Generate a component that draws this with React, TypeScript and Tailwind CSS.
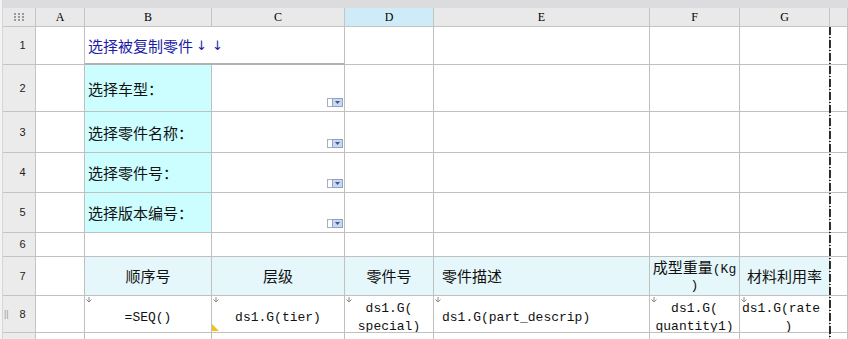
const cjk = "font-['Noto_Sans_CJK_SC',sans-serif] text-[15px]";
const mono = "font-['Liberation_Mono','Noto_Sans_CJK_SC',monospace] text-[13px]";
const line = "border-r border-b border-[#c0c0c0]";

const cols = "grid-cols-[33px_49px_127px_133px_89px_216px_90px_90px_18px]";
const rows = "grid-rows-[19px_38px_47px_41px_40px_40px_24px_39px_37px_20px]";

function Arrow() {
  return (
    <svg className="absolute left-[1px] top-[1px]" width="6" height="6" viewBox="0 0 6 6">
      <path d="M3 0 V5 M0.5 2.5 L3 5 L5.5 2.5" stroke="#8a8a8a" strokeWidth="1" fill="none" />
    </svg>
  );
}

function Dropdown() {
  return (
    <svg className="absolute right-[1px] bottom-[4px]" width="16" height="9" viewBox="0 0 16 9">
      <rect x="0.5" y="0.5" width="5" height="8" fill="#fff" stroke="#a5afc0" />
      <rect x="5.5" y="0.5" width="10" height="8" fill="#c9d7ef" stroke="#8ea3c8" />
      <path d="M8 3 H13 L10.5 6 Z" fill="#3b5694" />
    </svg>
  );
}

function RowHead({ n }: { n: string }) {
  return (
    <div className="relative flex items-center justify-center bg-[#ebebeb] border-r border-b border-[#c4c4c4] font-['Liberation_Sans',sans-serif] text-[11px] text-[#222] pl-[7px]">
      {n}
      {n === "8" && <span className="absolute left-[1px] top-[12px] text-[9px] text-[#9a9a9a]">||</span>}
    </div>
  );
}

function Blank({ bg = "bg-white" }: { bg?: string }) {
  return <div className={`${line} ${bg}`} />;
}

function ColHead({ l, bg = "bg-[#e9e9e9]" }: { l: string; bg?: string }) {
  return (
    <div className={`flex items-center justify-center ${bg} border-r border-b border-[#c4c4c4] font-['Liberation_Serif',serif] text-[12px] text-black`}>
      {l}
    </div>
  );
}

function Label({ t }: { t: string }) {
  return (
    <div className={`${line} bg-[#ccfeff] flex items-center pl-[3px] pt-[2px] ${cjk} text-[#111]`}>{t}</div>
  );
}

function Select() {
  return (
    <div className={`${line} bg-white relative`}>
      <Dropdown />
    </div>
  );
}

function Head({ children, left }: { children: React.ReactNode; left?: boolean }) {
  return (
    <div
      className={`${line} bg-[#e5f7fa] flex flex-col justify-center ${left ? "items-start pl-[8px]" : "items-center"} leading-[16px] ${cjk} text-[#111]`}
    >
      {children}
    </div>
  );
}

function Data({ children, left, corner }: { children: React.ReactNode; left?: boolean; corner?: boolean }) {
  return (
    <div
      className={`${line} bg-white relative overflow-hidden flex flex-col justify-center pt-[8px] ${left ? "items-start pl-[8px]" : "items-center"} leading-[18px] ${mono} text-[#111]`}
    >
      <Arrow />
      {children}
      {corner && (
        <svg className="absolute left-0 bottom-[1px]" width="7" height="7" viewBox="0 0 7 7">
          <path d="M0 0 L0 7 L7 7 Z" fill="#eec21c" />
        </svg>
      )}
    </div>
  );
}

export default function App() {
  return (
    <div className="relative w-[848px] h-[339px] overflow-hidden bg-white flex">
      <div className="w-[3px] h-full shrink-0 bg-[#f3f3f3] border-r border-[#d6d6d6]" />
      <div className="flex-1 flex flex-col">
        <div className="h-[8px] shrink-0 bg-[#dcdcde]" />
        <div className={`grid shrink-0 ${cols} ${rows}`}>
          {/* column headers */}
          <div className="flex items-center justify-center bg-[#e9e9e9] border-r border-b border-[#c4c4c4]">
            <svg width="10" height="8" viewBox="0 0 10 8">
              {[0, 4, 8].map((x) =>
                [0, 3, 6].map((y) => <rect key={`${x}-${y}`} x={x} y={y} width="2" height="2" fill="#9a9a9a" />)
              )}
            </svg>
          </div>
          <ColHead l="A" />
          <ColHead l="B" />
          <ColHead l="C" />
          <ColHead l="D" bg="bg-[#cfebf8]" />
          <ColHead l="E" />
          <ColHead l="F" />
          <ColHead l="G" />
          <ColHead l="" />

          {/* row 1 */}
          <RowHead n="1" />
          <Blank />
          <div className={`col-span-2 border-r border-b-2 border-r-[#c0c0c0] border-b-[#b3b3b3] bg-white flex items-center pl-[3px] pt-[2px] ${cjk} text-[#1b1ba8]`}>
            选择被复制零件
            <span className="font-['DejaVu_Sans',sans-serif] text-[13px] ml-[3px]">↓</span>
            <span className="font-['DejaVu_Sans',sans-serif] text-[13px] ml-[5px]">↓</span>
          </div>
          <Blank />
          <Blank />
          <Blank />
          <Blank />
          <Blank />

          {/* rows 2-5 */}
          {["选择车型：", "选择零件名称：", "选择零件号：", "选择版本编号："].map((t, i) => (
            <div key={t} className="contents">
              <RowHead n={String(i + 2)} />
              <Blank />
              <Label t={t} />
              <Select />
              <Blank />
              <Blank />
              <Blank />
              <Blank />
              <Blank />
            </div>
          ))}

          {/* row 6 */}
          <RowHead n="6" />
          <Blank />
          <Blank />
          <Blank />
          <Blank />
          <Blank />
          <Blank />
          <Blank />
          <Blank />

          {/* row 7 */}
          <RowHead n="7" />
          <Blank />
          <Head>顺序号</Head>
          <Head>层级</Head>
          <Head>零件号</Head>
          <Head left>零件描述</Head>
          <Head>
            <span>
              成型重量<span className="font-['Liberation_Mono',monospace] text-[13px]">(Kg</span>
            </span>
            <span className="font-['Liberation_Mono',monospace] text-[13px]">)</span>
          </Head>
          <Head>材料利用率</Head>
          <Blank />

          {/* row 8 */}
          <RowHead n="8" />
          <Blank />
          <Data>=SEQ()</Data>
          <Data corner>ds1.G(tier)</Data>
          <Data>
            <span>ds1.G(</span>
            <span>special)</span>
          </Data>
          <Data left>ds1.G(part_descrip)</Data>
          <Data>
            <span>ds1.G(</span>
            <span>quantity1)</span>
          </Data>
          <Data left>
            <span className="-ml-[6px]">ds1.G(rate</span>
            <span className="self-center">)</span>
          </Data>
          <Blank />

          {/* row 9 partial */}
          <div className="bg-[#ebebeb] border-r border-[#c4c4c4]" />
          <Blank />
          <Blank />
          <Blank />
          <Blank />
          <Blank />
          <Blank />
          <Blank />
          <Blank />
        </div>
      </div>
      {/* page break marker */}
      <svg className="absolute left-[829px] top-[27px]" width="2" height="312" viewBox="0 0 2 312">
        <path d="M1 0 V312" stroke="#000" strokeWidth="1.6" strokeDasharray="8 2 1 2" />
      </svg>
    </div>
  );
}
